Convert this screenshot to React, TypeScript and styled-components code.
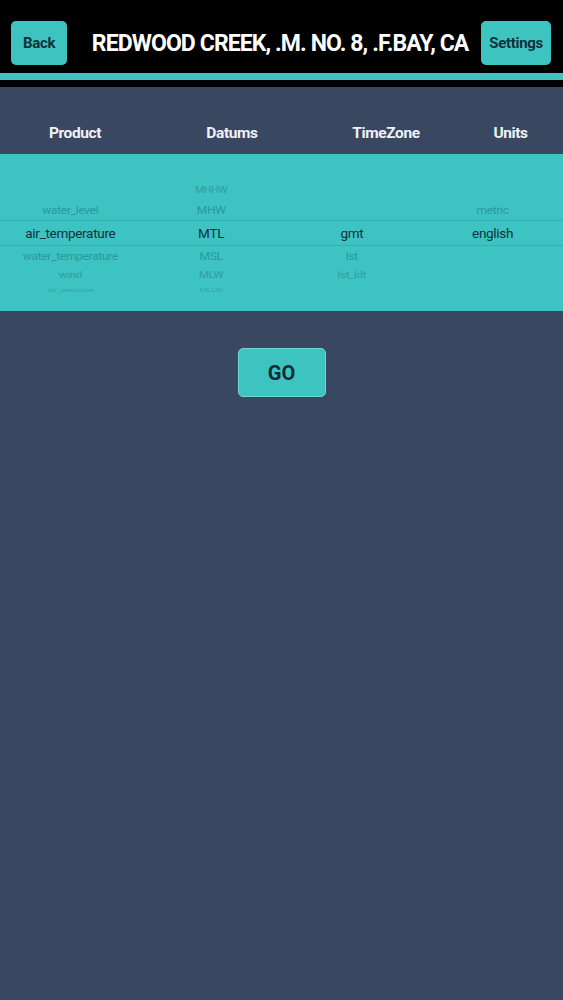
import * as React from 'react';
import styled, { createGlobalStyle } from 'styled-components';

const GlobalStyle = createGlobalStyle`
  html, body {
    margin: 0;
    padding: 0;
    background: #3a4761;
    font-family: Roboto, "Liberation Sans", Arial, sans-serif;
  }
`;

interface PickerItem {
  label: string;
  slot: number;
}

interface PickerColumn {
  items: PickerItem[];
}

// slot -2 .. +3 around the selected row
const SLOTS = [-2, -1, 0, 1, 2, 3];

const columns: PickerColumn[] = [
  {
    items: [
      { label: 'water_level', slot: -1 },
      { label: 'air_temperature', slot: 0 },
      { label: 'water_temperature', slot: 1 },
      { label: 'wind', slot: 2 },
      { label: 'air_pressure', slot: 3 },
    ],
  },
  {
    items: [
      { label: 'MHHW', slot: -2 },
      { label: 'MHW', slot: -1 },
      { label: 'MTL', slot: 0 },
      { label: 'MSL', slot: 1 },
      { label: 'MLW', slot: 2 },
      { label: 'MLLW', slot: 3 },
    ],
  },
  {
    items: [
      { label: 'gmt', slot: 0 },
      { label: 'lst', slot: 1 },
      { label: 'lst_ldt', slot: 2 },
    ],
  },
  {
    items: [
      { label: 'metric', slot: -1 },
      { label: 'english', slot: 0 },
    ],
  },
];

const headers = ['Product', 'Datums', 'TimeZone', 'Units'];

export default function App() {
  return (
    <>
      <GlobalStyle />
      <Page>
        <TopBar>
          <NavButton>Back</NavButton>
          <Title>REDWOOD CREEK, .M. NO. 8, .F.BAY, CA</Title>
          <NavButton>Settings</NavButton>
        </TopBar>
        <AccentLine />
        <Gap />

        <HeaderRow>
          {headers.map((h) => (
            <HeaderCell key={h}>{h}</HeaderCell>
          ))}
        </HeaderRow>

        <PickerBand>
          {columns.map((col, i) => (
            <Wheel key={i}>
              {SLOTS.map((slot) => {
                const item = col.items.find((it) => it.slot === slot);
                return (
                  <Slot key={slot} slot={slot}>
                    {item && <SlotText slot={slot}>{item.label}</SlotText>}
                  </Slot>
                );
              })}
            </Wheel>
          ))}
        </PickerBand>

        <Actions>
          <GoButton>GO</GoButton>
        </Actions>
      </Page>
    </>
  );
}

const Page = styled.div`
  min-height: 1000px;
  background: #3a4761;
`;

const TopBar = styled.div`
  display: flex;
  align-items: center;
  justify-content: space-between;
  background: #000;
  padding: 21px 12px 8px 11px;
`;

const NavButton = styled.button`
  height: 44px;
  padding: 0 8px;
  min-width: 56px;
  border: none;
  border-radius: 5px;
  background: #3ec4c0;
  color: #12303b;
  font-family: Roboto, "Liberation Sans", sans-serif;
  font-weight: 700;
  font-size: 15px;
  letter-spacing: -0.3px;
`;

const Title = styled.div`
  flex: 1;
  padding-left: 12px;
  text-align: center;
  color: #fff;
  font-weight: 700;
  font-size: 23px;
  letter-spacing: -0.9px;
  white-space: nowrap;
`;

const AccentLine = styled.div`
  height: 7px;
  background: #3ec4c0;
`;

const Gap = styled.div`
  height: 7px;
  background: #000;
`;

const HeaderRow = styled.div`
  display: grid;
  grid-template-columns: 150px 164px 144px 1fr;
  padding: 36px 0 11px;
`;

const HeaderCell = styled.div`
  text-align: center;
  line-height: 20px;
  color: #eef1f6;
  font-weight: 700;
  font-size: 15.5px;
  letter-spacing: -0.4px;
`;

const PickerBand = styled.div`
  display: grid;
  grid-template-columns: repeat(4, 1fr);
  background: #3dc3c1;
  padding: 26px 0 15px;
`;

const Wheel = styled.div`
  display: flex;
  flex-direction: column;
`;

const slotHeight: Record<number, number> = {
  [-2]: 20,
  [-1]: 20,
  0: 26,
  1: 20,
  2: 18,
  3: 12,
};

const slotSize: Record<number, number> = {
  [-2]: 10.5,
  [-1]: 12,
  0: 13.5,
  1: 12,
  2: 11.5,
  3: 9,
};

const slotScale: Record<number, number> = {
  [-2]: 0.85,
  [-1]: 0.95,
  0: 1,
  1: 0.95,
  2: 0.85,
  3: 0.55,
};

const slotAlpha: Record<number, number> = {
  [-2]: 0.45,
  [-1]: 0.52,
  0: 1,
  1: 0.52,
  2: 0.45,
  3: 0.3,
};

const Slot = styled.div<{ slot: number }>`
  height: ${(p) => slotHeight[p.slot]}px;
  display: flex;
  align-items: center;
  justify-content: center;
  box-sizing: border-box;
  ${(p) =>
    p.slot === 0
      ? 'border-top: 1px solid rgba(20, 90, 100, 0.16); border-bottom: 1px solid rgba(20, 90, 100, 0.16);'
      : ''}
`;

const SlotText = styled.span<{ slot: number }>`
  font-family: Roboto, "Liberation Sans", sans-serif;
  font-size: ${(p) => slotSize[p.slot]}px;
  letter-spacing: -0.3px;
  color: ${(p) => (p.slot === 0 ? '#14303c' : '#1f6f7e')};
  opacity: ${(p) => slotAlpha[p.slot]};
  transform: scaleY(${(p) => slotScale[p.slot]});
  white-space: nowrap;
`;

const Actions = styled.div`
  display: flex;
  justify-content: center;
  padding-top: 37px;
`;

const GoButton = styled.button`
  width: 88px;
  height: 49px;
  border: 1px solid #6fd6d2;
  border-radius: 5px;
  background: #3ec4c0;
  color: #102a36;
  font-family: Roboto, "Liberation Sans", sans-serif;
  font-weight: 700;
  font-size: 20px;
`;
